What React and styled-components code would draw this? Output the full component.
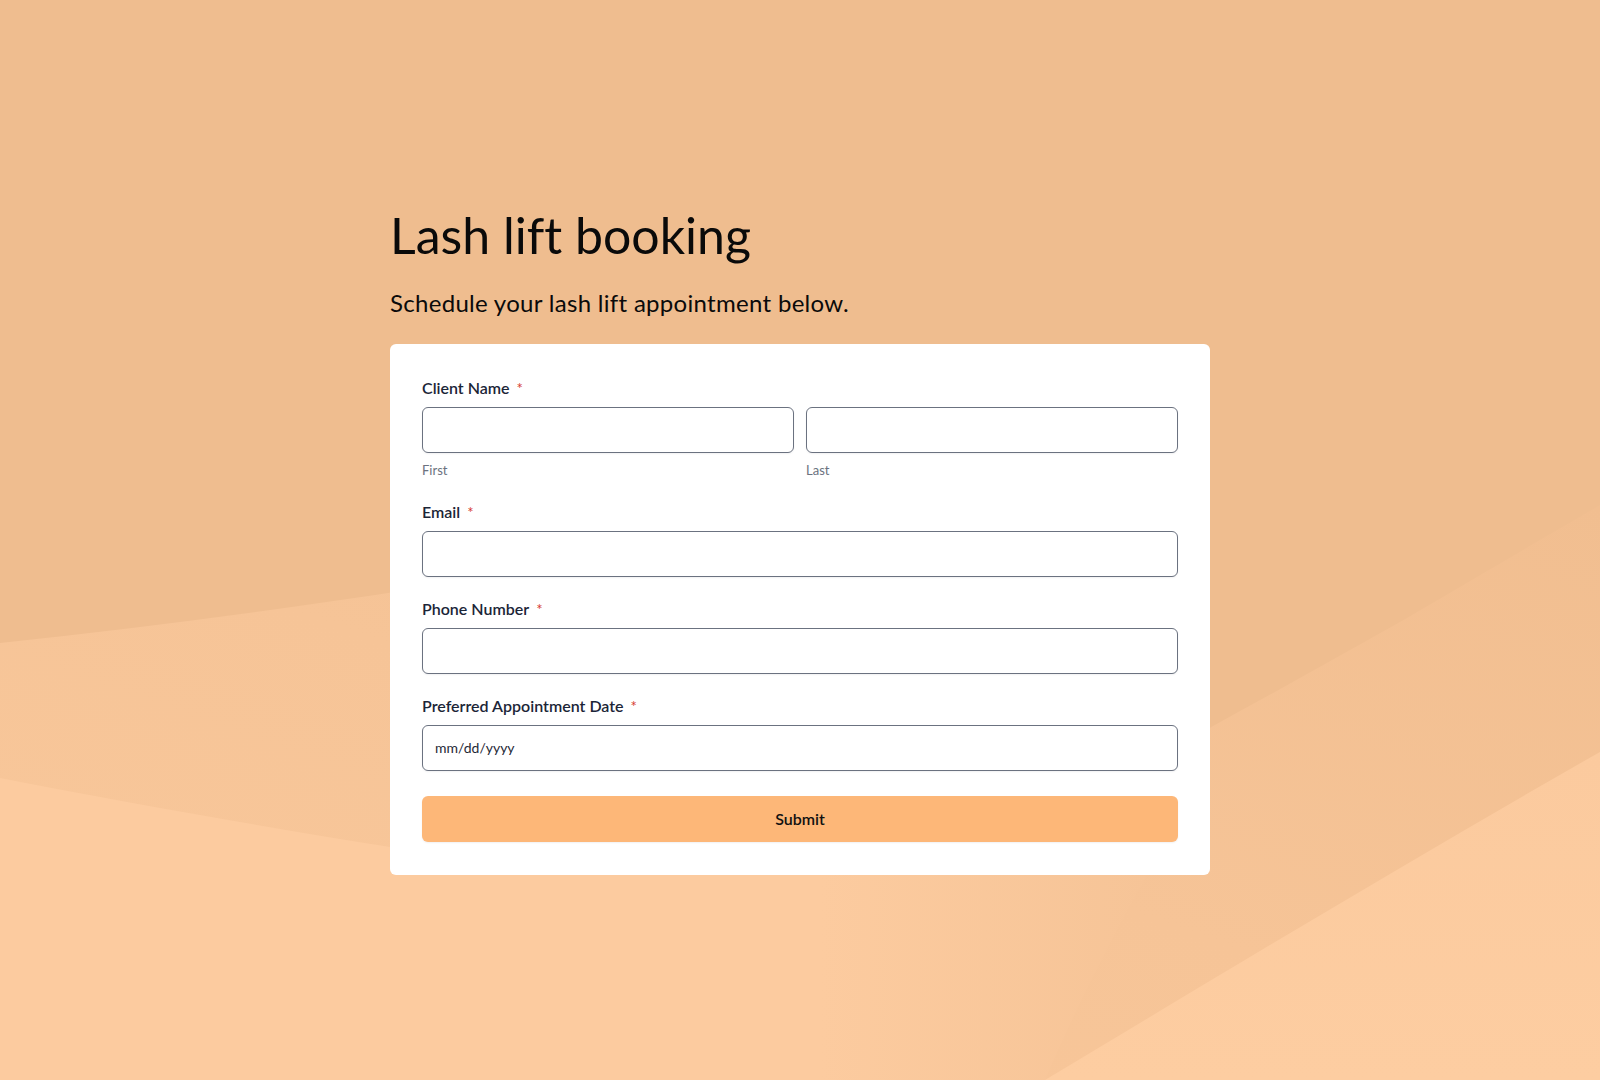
import React from "react";
import styled, { createGlobalStyle } from "styled-components";

const GlobalStyle = createGlobalStyle`
  * { box-sizing: border-box; }
  html, body { margin: 0; padding: 0; }
  body {
    font-family: Lato, "Noto Sans", "Liberation Sans", sans-serif;
    font-variant-ligatures: none;
    background: #efbd8f;
    color: #000;
  }
`;

const Page = styled.div`
  position: relative;
  min-height: 100vh;
  display: flex;
  align-items: center;
  justify-content: center;
  overflow: hidden;
`;

const Backdrop = styled.svg`
  position: absolute;
  inset: 0;
  width: 100%;
  height: 100%;
  z-index: 0;
`;

const Wrapper = styled.main`
  position: relative;
  z-index: 1;
  width: 820px;
  display: flex;
  flex-direction: column;
`;

const Title = styled.h1`
  margin: 0;
  font-size: 50px;
  font-weight: 400;
  line-height: 1.2;
  color: #0a0a0a;
`;

const Subtitle = styled.p`
  margin: 24px 0 26px;
  font-size: 24px;
  font-weight: 400;
  line-height: 1.2;
  letter-spacing: 0.3px;
  color: #0a0a0a;
`;

const Card = styled.form`
  background: #ffffff;
  border-radius: 6px;
  padding: 32px 32px 33px;
  display: flex;
  flex-direction: column;
`;

const Field = styled.div`
  display: flex;
  flex-direction: column;
  margin-bottom: ${(p) => p.$gap ?? 20}px;
`;

const Label = styled.label`
  display: flex;
  align-items: baseline;
  font-size: 16px;
  font-weight: 600;
  line-height: 24px;
  color: #1b2537;
  margin-bottom: 7px;
`;

const Required = styled.span`
  color: #d63a2f;
  font-size: 15px;
  font-weight: 400;
  margin-left: 7px;
`;

const Row = styled.div`
  display: grid;
  grid-template-columns: 1fr 1fr;
  column-gap: 12px;
`;

const SubField = styled.div`
  display: flex;
  flex-direction: column;
`;

const Input = styled.input`
  width: 100%;
  height: 46px;
  border: 1px solid #6b7280;
  border-radius: 6px;
  background: #fff;
  padding: 0 12px;
  font-family: Lato, "Noto Sans", sans-serif;
  font-size: 14px;
  color: #1f2937;
  box-shadow: 0 1px 2px rgba(17, 24, 39, 0.06);
  outline: none;
  &::placeholder {
    color: #1f2937;
    opacity: 1;
  }
`;

const Hint = styled.span`
  margin-top: 7px;
  font-size: 13px;
  line-height: 20px;
  color: #6b7280;
`;

const SubmitButton = styled.button`
  height: 46px;
  width: 100%;
  border: none;
  border-radius: 6px;
  background: #fdb778;
  font-family: Lato, "Noto Sans", sans-serif;
  font-size: 16px;
  font-weight: 600;
  color: #111111;
  box-shadow: 0 1px 2px rgba(17, 24, 39, 0.06);
  cursor: pointer;
`;

function Background() {
  return (
    <Backdrop viewBox="0 0 1600 1080" preserveAspectRatio="none" aria-hidden="true">
      <defs>
        <linearGradient id="mid" x1="1" y1="0" x2="0" y2="1">
          <stop offset="0" stopColor="#f1be90" />
          <stop offset="0.5" stopColor="#f6c497" />
          <stop offset="1" stopColor="#f9c89b" />
        </linearGradient>
        <linearGradient id="fade" gradientUnits="userSpaceOnUse" x1="820" y1="0" x2="1150" y2="0">
          <stop offset="0" stopColor="#fccb9f" />
          <stop offset="1" stopColor="#f6c497" />
        </linearGradient>
        <linearGradient id="light" x1="0" y1="0" x2="0" y2="1">
          <stop offset="0" stopColor="#fbca9e" />
          <stop offset="1" stopColor="#fdcda1" />
        </linearGradient>
      </defs>
      <rect x="0" y="0" width="1600" height="1080" fill="#efbd8f" />
      <path
        d="M0,643 C140,628 280,610 420,588 L1190,560 L1190,740 L1213,726 C1290,684 1350,650 1407,618 C1480,575 1540,540 1600,505 V1080 H0 Z"
        fill="url(#mid)"
      />
      <path
        d="M0,778 C140,805 270,828 390,847 L1150,870 C1110,940 1075,1010 1045,1080 H0 Z"
        fill="url(#fade)"
      />
      <path
        d="M1045,1080 C1220,975 1410,860 1600,752 V1080 Z"
        fill="url(#light)"
      />
    </Backdrop>
  );
}

export default function App() {
  return (
    <>
      <GlobalStyle />
      <Page>
        <Background />
        <Wrapper>
          <Title>Lash lift booking</Title>
          <Subtitle>Schedule your lash lift appointment below.</Subtitle>
          <Card onSubmit={(e) => e.preventDefault()}>
            <Field>
              <Label>
                Client Name<Required>*</Required>
              </Label>
              <Row>
                <SubField>
                  <Input type="text" aria-label="First" />
                  <Hint>First</Hint>
                </SubField>
                <SubField>
                  <Input type="text" aria-label="Last" />
                  <Hint>Last</Hint>
                </SubField>
              </Row>
            </Field>
            <Field>
              <Label>
                Email<Required>*</Required>
              </Label>
              <Input type="email" />
            </Field>
            <Field>
              <Label>
                Phone Number<Required>*</Required>
              </Label>
              <Input type="tel" />
            </Field>
            <Field $gap={25}>
              <Label>
                Preferred Appointment Date<Required>*</Required>
              </Label>
              <Input type="text" placeholder="mm/dd/yyyy" />
            </Field>
            <SubmitButton type="submit">Submit</SubmitButton>
          </Card>
        </Wrapper>
      </Page>
    </>
  );
}
